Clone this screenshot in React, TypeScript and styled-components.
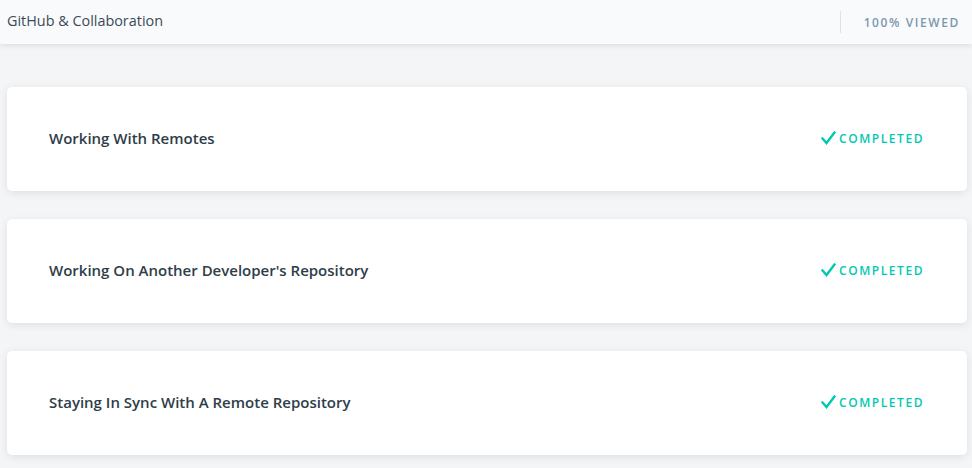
import styled, { createGlobalStyle } from "styled-components";

const GlobalStyle = createGlobalStyle`
  html, body {
    margin: 0;
    padding: 0;
    background: #f4f5f7;
    font-family: "Open Sans", "Liberation Sans", sans-serif;
  }
`;

const Page = styled.div`
  width: 972px;
  min-height: 468px;
  background: #f4f5f7;
  overflow: hidden;
`;

const Header = styled.header`
  height: 44px;
  background: #f9fafc;
  display: flex;
  align-items: center;
  justify-content: space-between;
  padding: 0 12px 0 7px;
  box-shadow: 0 1px 6px rgba(0, 0, 0, 0.12);
  position: relative;
  z-index: 1;
`;

const LessonTitle = styled.h1`
  margin: -3px 0 0;
  font-size: 14.4px;
  font-weight: 400;
  color: #3c4a57;
`;

const Progress = styled.div`
  display: flex;
  align-items: center;
  height: 22px;
  padding-left: 23px;
  border-left: 1px solid #dbe2e8;
  font-size: 12px;
  font-weight: 600;
  letter-spacing: 1.6px;
  color: #7d97ad;
`;

const List = styled.div`
  display: flex;
  flex-direction: column;
  gap: 28px;
  padding: 43px 5px 0 7px;
`;

const Card = styled.div`
  height: 104px;
  background: #ffffff;
  border-radius: 5px;
  box-shadow: 0 2px 9px rgba(0, 0, 0, 0.09);
  display: flex;
  align-items: center;
  justify-content: space-between;
  padding: 0 43px 0 42px;
`;

const CardTitle = styled.span`
  font-size: 15px;
  font-weight: 600;
  color: #2e3d49;
  margin-top: -2px;
`;

const Status = styled.span`
  display: flex;
  align-items: center;
  gap: 3px;
  font-size: 12px;
  font-weight: 600;
  letter-spacing: 1.55px;
  color: #02c8b2;
  margin-top: -2px;
`;

const Check = () => (
  <svg width="15" height="14" viewBox="0 0 15 14" fill="none">
    <path d="M1.5 7.5 L5.5 12 L13.5 1.5" stroke="#02c8b2" strokeWidth="2.4" strokeLinecap="square" />
  </svg>
);

const concepts = [
  "Working With Remotes",
  "Working On Another Developer's Repository",
  "Staying In Sync With A Remote Repository",
];

export default function App() {
  return (
    <Page>
      <GlobalStyle />
      <Header>
        <LessonTitle>GitHub &amp; Collaboration</LessonTitle>
        <Progress>100% VIEWED</Progress>
      </Header>
      <List>
        {concepts.map((c) => (
          <Card key={c}>
            <CardTitle>{c}</CardTitle>
            <Status>
              <Check />
              COMPLETED
            </Status>
          </Card>
        ))}
      </List>
    </Page>
  );
}
